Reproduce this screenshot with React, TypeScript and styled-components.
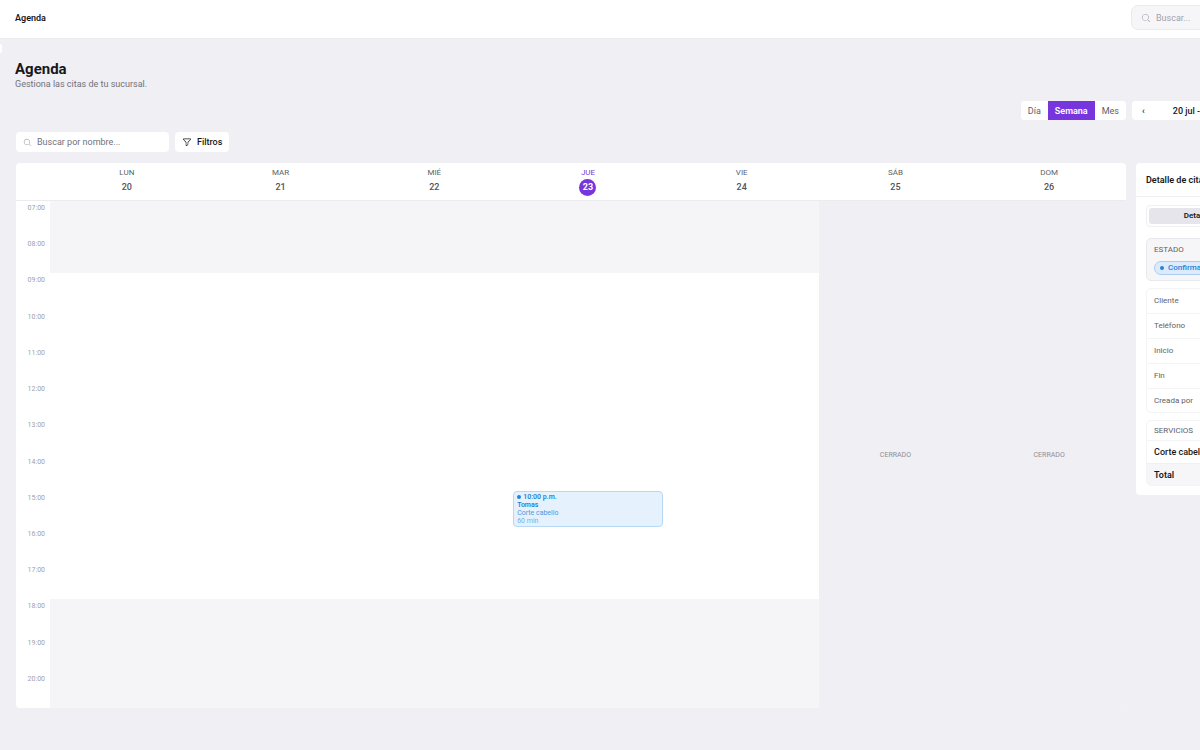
import React from "react";
import styled, { createGlobalStyle, css } from "styled-components";
import { PiMagnifyingGlass, PiFunnel } from "react-icons/pi";

const GlobalStyle = createGlobalStyle`
  *, *::before, *::after { box-sizing: border-box; }
  body {
    margin: 0;
    overflow-x: hidden;
    background: #f0eff4;
    color: #18181b;
    font-family: Roboto, "Liberation Sans", sans-serif;
    font-size: 9px;
    line-height: 12px;
  }
  button, input { font: inherit; color: inherit; }
  h1, h2, h3, p, dl, dd { margin: 0; }
`;

const Viewport = styled.div`
  position: relative;
  overflow: hidden;
  min-height: 100vh;
`;

const Page = styled.div`
  width: calc(100% + 166px);
`;

const TopBar = styled.header`
  display: flex;
  align-items: center;
  justify-content: space-between;
  height: 39px;
  padding: 0 15px 3px;
  background: #fff;
  border-bottom: 1px solid #ebebef;
`;

const Crumb = styled.span`
  font-weight: 600;
`;

const SidebarHandle = styled.button`
  position: absolute;
  top: 44px;
  left: 0;
  width: 2px;
  height: 9px;
  padding: 0;
  border: 0;
  border-radius: 0 2px 2px 0;
  background: #fff;
`;

const SearchField = styled.label<{ $muted?: boolean }>`
  display: flex;
  align-items: center;
  gap: 5px;
  width: 153px;
  height: 20px;
  padding: 0 7px;
  border-radius: 4px;
  background: #fff;
  color: #a1a1aa;

  ${(p) =>
    p.$muted &&
    css`
      width: 220px;
      height: 25px;
      padding: 0 9px;
      border: 1px solid #ebebee;
      border-radius: 7px;
      background: #f6f6f8;
    `}
`;

const SearchInput = styled.input<{ $muted?: boolean }>`
  flex: 1;
  min-width: 0;
  padding: 0;
  border: 0;
  outline: 0;
  background: transparent;
  &::placeholder {
    color: ${(p) => (p.$muted ? "#a1a1aa" : "#71717a")};
    opacity: 1;
  }
`;

const Content = styled.main`
  padding: 22px 15px 40px;
`;

const Title = styled.h1`
  font-size: 15px;
  line-height: 17px;
  font-weight: 700;
`;

const Subtitle = styled.p`
  color: #71717a;
`;

const Controls = styled.div`
  display: flex;
  gap: 6px;
  justify-content: flex-end;
  margin-top: 11px;
`;

const Segmented = styled.div`
  display: flex;
  flex: none;
  overflow: hidden;
  height: 19px;
  border-radius: 4px;
  background: #fff;
`;

const Segment = styled.button<{ $active?: boolean }>`
  padding: 0 7px;
  border: 0;
  background: ${(p) => (p.$active ? "#7736dd" : "#fff")};
  color: ${(p) => (p.$active ? "#fff" : "#5f5f68")};
  font-weight: ${(p) => (p.$active ? 600 : 400)};
`;

const DateNav = styled.div`
  display: flex;
  flex: none;
  width: 219px;
  align-items: center;
  height: 19px;
  padding: 0 10px;
  gap: 28px;
  border-radius: 4px;
  background: #fff;
  font-weight: 500;
`;

const NavButton = styled.button`
  padding: 0;
  border: 0;
  background: transparent;
`;

const Filters = styled.div`
  display: flex;
  gap: 6px;
  margin: 12px 0 11px;
  padding-left: 1px;
`;

const FilterButton = styled.button`
  display: flex;
  align-items: center;
  gap: 5px;
  height: 20px;
  padding: 0 7px;
  border: 0;
  border-radius: 4px;
  background: #fff;
  font-weight: 500;
`;

const Workspace = styled.div`
  display: flex;
  align-items: flex-start;
  gap: 10px;
  padding-left: 1px;
`;

const Calendar = styled.section`
  flex: 1;
  min-width: 0;
  overflow: hidden;
  border-radius: 4px;
`;

const DayHeader = styled.div`
  display: grid;
  grid-template-columns: 34px repeat(7, 1fr);
  height: 38px;
  background: #fff;
  border-bottom: 1px solid #ebebef;
`;

const Day = styled.div<{ $today?: boolean }>`
  display: flex;
  flex-direction: column;
  align-items: center;
  padding-top: 5px;
  gap: 2px;
  color: ${(p) => (p.$today ? "#7736dd" : "#5f5f68")};
  font-size: 8px;
  line-height: 9px;
`;

const DayNumber = styled.span<{ $today?: boolean }>`
  width: 17px;
  height: 17px;
  border-radius: 50%;
  background: ${(p) => (p.$today ? "#7736dd" : "transparent")};
  color: ${(p) => (p.$today ? "#fff" : "#52525b")};
  font-size: 9px;
  line-height: 17px;
  font-weight: ${(p) => (p.$today ? 700 : 500)};
  text-align: center;
`;

const DayGrid = styled.div`
  display: grid;
  grid-template-columns: 34px repeat(7, 1fr);
  grid-template-rows: repeat(14, minmax(0, 1fr));
  height: 507px;
  background: #fff;
`;

const Hour = styled.span<{ $row: number }>`
  grid-column: 1;
  grid-row: ${(p) => p.$row};
  padding: 1px 5px 0 0;
  color: #a1a1a6;
  font-size: 7px;
  text-align: right;
`;

const OffHours = styled.div<{ $rows: string }>`
  grid-column: 2 / 7;
  grid-row: ${(p) => p.$rows};
  background: #f5f5f8;
`;

const ClosedDay = styled.div<{ $column: number }>`
  display: flex;
  align-items: center;
  justify-content: center;
  grid-column: ${(p) => p.$column};
  grid-row: 1 / -1;
  background: #f0eff4;
  color: #8e8e97;
  font-size: 7px;
`;

const Appointment = styled.button`
  display: flex;
  flex-direction: column;
  align-items: flex-start;
  justify-content: center;
  grid-column: 5;
  grid-row: 9;
  margin: 0 2px;
  padding: 1px 3px;
  border: 1px solid #b5d8f7;
  border-radius: 4px;
  background: #e5f2fe;
  color: #2583d6;
  font-size: 7px;
  line-height: 8px;
  text-align: left;
`;

const AppointmentLine = styled.span<{ $tone?: "strong" | "soft" | "faint" }>`
  display: flex;
  align-items: center;
  gap: 2px;
  font-weight: ${(p) => (p.$tone === "strong" ? 600 : 400)};
  opacity: ${(p) => (p.$tone === "faint" ? 0.6 : p.$tone === "soft" ? 0.8 : 1)};
`;

const Dot = styled.i`
  flex: none;
  width: 4px;
  height: 4px;
  border-radius: 50%;
  background: #2583d6;
`;

const Panel = styled.aside`
  flex: none;
  width: 215px;
  padding-bottom: 9px;
  border-radius: 4px;
  background: #fff;
`;

const PanelTitle = styled.h2`
  height: 34px;
  padding: 0 10px;
  border-bottom: 1px solid #f0f0f4;
  font-size: 9px;
  line-height: 35px;
  font-weight: 600;
`;

const PanelBody = styled.div`
  display: flex;
  flex-direction: column;
  gap: 7px;
  padding: 8px 10px 0;
`;

const Tabs = styled.div`
  display: grid;
  grid-template-columns: 1fr 1fr;
  height: 22px;
  margin-bottom: 4px;
  padding: 2px;
  border: 1px solid #f0f0f4;
  border-radius: 4px;
`;

const Tab = styled.button`
  padding: 0;
  border: 0;
  border-radius: 3px;
  background: #e6e5eb;
  font-size: 8px;
  font-weight: 600;
`;

const StatusCard = styled.section`
  height: 43px;
  padding: 5px 7px;
  border: 1px solid #e9e9ed;
  border-radius: 5px;
  background: #f6f6f9;
`;

const Caption = styled.h3`
  color: #5f5f68;
  font-size: 8px;
  line-height: 12px;
  font-weight: 400;
`;

const Badge = styled.span`
  display: inline-flex;
  align-items: center;
  gap: 4px;
  height: 14px;
  margin-top: 5px;
  padding: 0 5px;
  border: 1px solid #a9cdf2;
  border-radius: 7px;
  background: #dcebfb;
  color: #2583d6;
  font-size: 8px;
  font-weight: 500;
`;

const Card = styled.section`
  overflow: hidden;
  border: 1px solid #f4f4f7;
  border-radius: 5px;
`;

const Facts = styled.dl`
  display: grid;
  grid-auto-rows: 1fr;
  height: 123px;
`;

const Fact = styled.dt`
  padding: 0 7px;
  border-bottom: 1px solid #f4f4f7;
  color: #5f5f68;
  font-size: 8px;
  line-height: 24px;
  &:last-child { border-bottom: 0; }
`;

const Services = styled.table`
  width: 100%;
  border-spacing: 0;
  text-align: left;
`;

const ServiceCell = styled.td`
  height: 22px;
  padding: 0 7px;
  font-weight: 500;
`;

const ServiceHead = styled.th`
  height: 20px;
  padding: 0 7px;
  border-bottom: 1px solid #f4f4f7;
  color: #5f5f68;
  font-size: 8px;
  font-weight: 400;
`;

const TotalCell = styled.th`
  height: 22px;
  padding: 0 7px;
  border-top: 1px solid #f0f0f4;
  background: #f6f6f9;
  font-weight: 600;
`;

const days = [
  ["LUN", 20],
  ["MAR", 21],
  ["MIÉ", 22],
  ["JUE", 23],
  ["VIE", 24],
  ["SÁB", 25],
  ["DOM", 26],
] as const;
const today = 23;
const hours = Array.from({ length: 14 }, (_, i) => `${String(i + 7).padStart(2, "0")}:00`);
const facts = ["Cliente", "Teléfono", "Inicio", "Fin", "Creada por"];

export default function App() {
  return (
    <Viewport>
      <GlobalStyle />
      <Page>
        <TopBar>
          <Crumb>Agenda</Crumb>
          <SearchField $muted>
            <PiMagnifyingGlass size={10} />
            <SearchInput $muted type="search" placeholder="Buscar..." aria-label="Buscar" />
          </SearchField>
        </TopBar>
        <SidebarHandle aria-label="Abrir menú" />
        <Content>
          <Title>Agenda</Title>
          <Subtitle>Gestiona las citas de tu sucursal.</Subtitle>
          <Controls>
            <Segmented>
              <Segment>Día</Segment>
              <Segment $active>Semana</Segment>
              <Segment>Mes</Segment>
            </Segmented>
            <DateNav>
              <NavButton aria-label="Semana anterior">‹</NavButton>
              <span>20 jul - 26 jul</span>
            </DateNav>
          </Controls>
          <Filters>
            <SearchField>
              <PiMagnifyingGlass size={9} />
              <SearchInput type="search" placeholder="Buscar por nombre..." aria-label="Buscar por nombre" />
            </SearchField>
            <FilterButton>
              <PiFunnel size={10} />
              Filtros
            </FilterButton>
          </Filters>
          <Workspace>
            <Calendar>
              <DayHeader>
                <span />
                {days.map(([name, date]) => (
                  <Day key={name} $today={date === today}>
                    {name}
                    <DayNumber $today={date === today}>{date}</DayNumber>
                  </Day>
                ))}
              </DayHeader>
              <DayGrid>
                {hours.map((hour, i) => (
                  <Hour key={hour} $row={i + 1}>{hour}</Hour>
                ))}
                <OffHours $rows="1 / 3" />
                <OffHours $rows="12 / 15" />
                <ClosedDay $column={7}>CERRADO</ClosedDay>
                <ClosedDay $column={8}>CERRADO</ClosedDay>
                <Appointment>
                  <AppointmentLine $tone="strong"><Dot />10:00 p.m.</AppointmentLine>
                  <AppointmentLine $tone="strong">Tomas</AppointmentLine>
                  <AppointmentLine $tone="soft">Corte cabello</AppointmentLine>
                  <AppointmentLine $tone="faint">60 min</AppointmentLine>
                </Appointment>
              </DayGrid>
            </Calendar>
            <Panel>
              <PanelTitle>Detalle de cita</PanelTitle>
              <PanelBody>
                <Tabs>
                  <Tab>Detalle</Tab>
                </Tabs>
                <StatusCard>
                  <Caption>ESTADO</Caption>
                  <Badge><Dot />Confirmada</Badge>
                </StatusCard>
                <Card>
                  <Facts>
                    {facts.map((fact) => (
                      <Fact key={fact}>{fact}</Fact>
                    ))}
                  </Facts>
                </Card>
                <Card>
                  <Services>
                    <thead><tr><ServiceHead scope="col">SERVICIOS</ServiceHead></tr></thead>
                    <tbody><tr><ServiceCell>Corte cabello</ServiceCell></tr></tbody>
                    <tfoot><tr><TotalCell scope="row">Total</TotalCell></tr></tfoot>
                  </Services>
                </Card>
              </PanelBody>
            </Panel>
          </Workspace>
        </Content>
      </Page>
    </Viewport>
  );
}
